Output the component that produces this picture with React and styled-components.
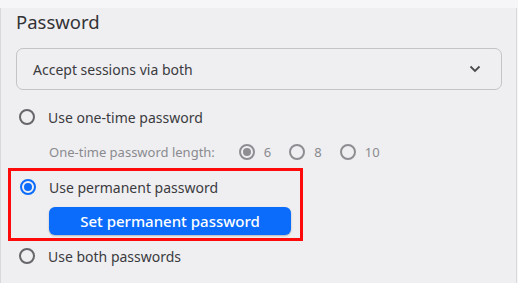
import React, { useState } from "react";
import styled, { createGlobalStyle } from "styled-components";

const GlobalStyle = createGlobalStyle`
  html, body {
    margin: 0;
    padding: 0;
    background: #f6f6f8;
    font-family: "Noto Sans", "Open Sans", sans-serif;
    color: #3b3b3e;
  }
`;

const Card = styled.div`
  box-sizing: border-box;
  width: 517px;
  height: 281px;
  background: #efeff2;
  border: 1px solid #d9d9dc;
  border-top: none;
  border-radius: 0 0 6px 6px;
  padding: 0 14px 0 15px;
`;

const Title = styled.h2`
  margin: 8px 0 0;
  font-size: 18.5px;
  font-weight: 400;
  line-height: 28px;
  color: #333336;
`;

const Select = styled.div`
  box-sizing: border-box;
  margin-top: 12px;
  height: 42px;
  border: 1px solid #c4c4c7;
  border-radius: 7px;
  display: flex;
  align-items: center;
  justify-content: space-between;
  padding: 0 20px 0 16px;
  font-size: 14px;
  color: #3b3b3e;
`;

const Row = styled.label`
  display: flex;
  align-items: center;
  gap: 13px;
  height: 28px;
  padding-left: 3px;
  margin-top: ${(p) => p.$mt || 0}px;
  font-size: 14px;
  cursor: pointer;
`;

const SubRow = styled.div`
  display: flex;
  align-items: center;
  height: 28px;
  margin-top: 7px;
  padding-left: 33px;
  font-size: 13px;
  color: #8a8a8e;
`;

const SubLabel = styled.span`
  margin-right: 24px;
`;

const Choice = styled.span`
  display: flex;
  align-items: center;
  gap: 9px;
  margin-right: 18px;
`;

const Radio = styled.span`
  box-sizing: border-box;
  width: 16px;
  height: 16px;
  flex: none;
  border-radius: 50%;
  border: 2px solid ${(p) => (p.$checked ? p.$color : p.$muted ? "#8e8e92" : "#67676b")};
  display: flex;
  align-items: center;
  justify-content: center;
  &::after {
    content: "";
    width: 8px;
    height: 8px;
    border-radius: 50%;
    background: ${(p) => (p.$checked ? p.$color : "transparent")};
  }
`;

const Highlight = styled.div`
  box-sizing: border-box;
  width: 295px;
  margin: 2px 0 0 -8px;
  border: 3px solid #ff0a0a;
  padding: 2px 0 3px 6px;
`;

const Button = styled.button`
  display: block;
  box-sizing: border-box;
  margin: 6px 0 0 32px;
  width: 242px;
  height: 28px;
  border: none;
  border-radius: 6px;
  background: #0b6cfb;
  box-shadow: 0 1px 2px rgba(0, 0, 0, 0.25);
  color: #ffffff;
  font-family: inherit;
  font-size: 15px;
  font-weight: 500;
  cursor: pointer;
`;

const Chevron = () => (
  <svg width="12" height="8" viewBox="0 0 12 8">
    <path d="M1.5 1.5 L6 6 L10.5 1.5" fill="none" stroke="#4a4a4e" strokeWidth="1.8" />
  </svg>
);

const lengths = [6, 8, 10];

export default function App() {
  const [mode, setMode] = useState("permanent");
  const [len, setLen] = useState(6);

  return (
    <>
      <GlobalStyle />
      <Card>
        <Title>Password</Title>
        <Select>
          <span>Accept sessions via both</span>
          <Chevron />
        </Select>
        <Row $mt={13} onClick={() => setMode("onetime")}>
          <Radio $checked={mode === "onetime"} $color="#0b6cfb" />
          Use one-time password
        </Row>
        <SubRow>
          <SubLabel>One-time password length:</SubLabel>
          {lengths.map((n) => (
            <Choice key={n} onClick={() => setLen(n)}>
              <Radio $muted $checked={len === n} $color="#8e8e92" />
              {n}
            </Choice>
          ))}
        </SubRow>
        <Highlight>
          <Row onClick={() => setMode("permanent")}>
            <Radio $checked={mode === "permanent"} $color="#0b6cfb" />
            Use permanent password
          </Row>
          <Button>Set permanent password</Button>
        </Highlight>
        <Row $mt={1} onClick={() => setMode("both")}>
          <Radio $checked={mode === "both"} $color="#0b6cfb" />
          Use both passwords
        </Row>
      </Card>
    </>
  );
}
